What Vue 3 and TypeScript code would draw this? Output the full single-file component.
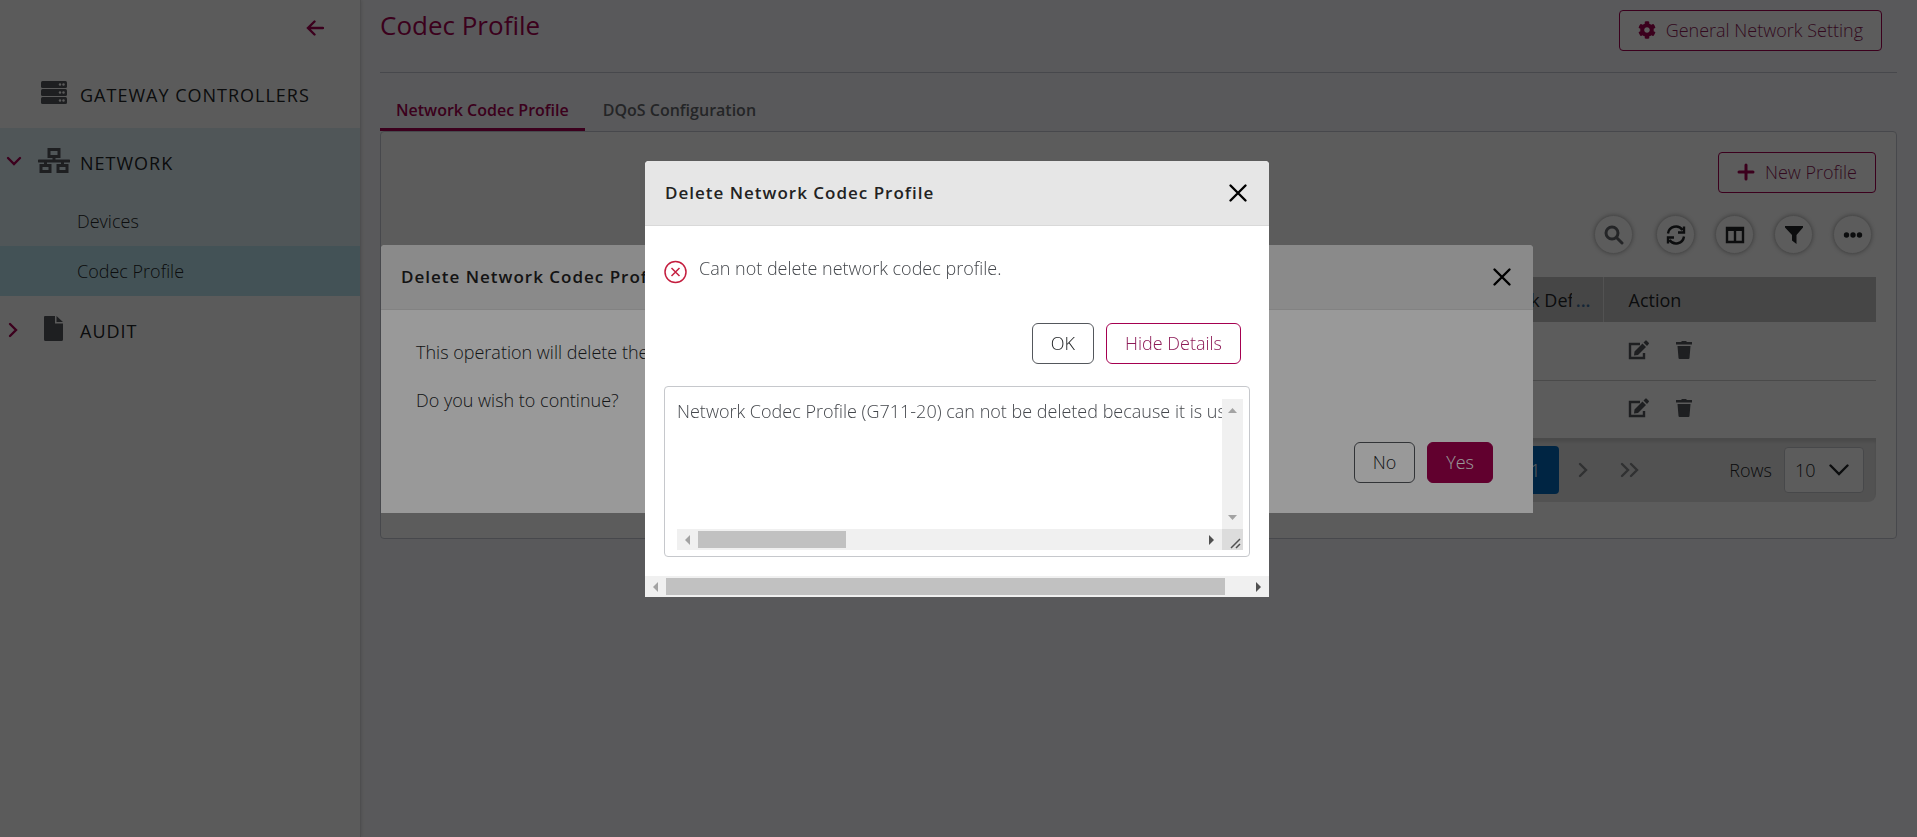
<script setup lang="ts">
import { ref } from 'vue'

interface ProfileRow {
  id: number
}

const rows: ProfileRow[] = [{ id: 1 }, { id: 2 }]
const pageSize = ref('10')
const details = ref('Network Codec Profile (G711-20) can not be deleted because it is used')
</script>

<template>
  <div class="app">
    <nav class="sidebar" aria-label="Main">
      <div class="sidebar-top">
        <button class="icon-btn accent" aria-label="Collapse menu">
          <svg width="18" height="18" viewBox="0 0 18 18"><path d="M8.500 2.500 2 9l6.500 6.500M2.500 9H17" class="line w2" /></svg>
        </button>
      </div>
      <a href="#" class="nav-item">
        <span class="caret"></span>
        <svg class="nav-icon" width="32" height="28" viewBox="0 0 32 28">
          <g fill="currentColor"><rect x="3" y="1" width="26" height="7" rx="1.500" /><rect x="3" y="9" width="26" height="7" rx="1.500" /><rect x="3" y="17" width="26" height="7" rx="1.500" /></g>
          <g class="leds"><circle cx="22" cy="4.500" r="1.200" /><circle cx="25.500" cy="4.500" r="1.200" /><circle cx="22" cy="12.500" r="1.200" /><circle cx="25.500" cy="12.500" r="1.200" /><circle cx="22" cy="20.500" r="1.200" /><circle cx="25.500" cy="20.500" r="1.200" /></g>
        </svg>
        <span>GATEWAY CONTROLLERS</span>
      </a>
      <div class="nav-group">
        <a href="#" class="nav-item">
          <svg class="caret" width="16" height="16" viewBox="0 0 16 16"><path d="m2 4 6 6 6-6" class="line w2" /></svg>
          <svg class="nav-icon" width="32" height="28" viewBox="0 0 32 28">
            <path d="M11 1.500h10v7H11zM3 17.500h9v6H3zM20 17.500h9v6h-9zM16 9v4M7.500 13v4M24.500 13v4M1 13h30" class="line w3" />
          </svg>
          <span>NETWORK</span>
        </a>
        <a href="#" class="sub-item">Devices</a>
        <a href="#" class="sub-item active">Codec Profile</a>
      </div>
      <a href="#" class="nav-item">
        <svg class="caret" width="16" height="16" viewBox="0 0 16 16"><path d="m4 2 6 6-6 6" class="line w2" /></svg>
        <svg class="nav-icon" width="32" height="28" viewBox="0 0 32 28">
          <path d="M7 0h10v7.500h8V23.500a1.500 1.500 0 0 1-1.500 1.500h-16A1.500 1.500 0 0 1 6 23.500V1a1 1 0 0 1 1-1ZM18.500 0l6.500 6h-6.500z" fill="currentColor" />
        </svg>
        <span>AUDIT</span>
      </a>
    </nav>

    <main class="content">
      <header class="page-head">
        <h1>Codec Profile</h1>
        <button class="btn outline">
          <svg width="18" height="18" viewBox="0 0 512 512"><path fill="currentColor" d="M487.400 315.700l-42.600-24.600c4.300-23.200 4.300-47 0-70.200l42.600-24.600c4.900-2.800 7.100-8.600 5.500-14-11.100-35.600-30-67.800-54.700-94.600-3.800-4.100-10-5.100-14.800-2.300L380.800 110c-17.900-15.400-38.500-27.300-60.800-35.100V25.800c0-5.600-3.900-10.500-9.400-11.700-36.700-8.200-74.300-7.800-109.200 0-5.500 1.200-9.400 6.100-9.400 11.700V75c-22.200 7.900-42.800 19.800-60.800 35.100L88.700 85.500c-4.900-2.800-11-1.900-14.800 2.300-24.700 26.700-43.600 58.900-54.700 94.600-1.700 5.400.6 11.200 5.500 14L67.300 221c-4.300 23.200-4.300 47 0 70.200l-42.600 24.600c-4.900 2.800-7.100 8.600-5.500 14 11.100 35.600 30 67.800 54.700 94.600 3.800 4.100 10 5.100 14.800 2.300l42.600-24.600c17.900 15.400 38.500 27.300 60.800 35.100v49.200c0 5.600 3.900 10.500 9.400 11.700 36.700 8.200 74.300 7.800 109.200 0 5.500-1.200 9.400-6.100 9.400-11.700v-49.200c22.200-7.900 42.800-19.800 60.800-35.100l42.600 24.600c4.900 2.800 11 1.900 14.800-2.300 24.700-26.700 43.600-58.900 54.700-94.600 1.500-5.500-.7-11.300-5.600-14.100zM256 336c-44.100 0-80-35.900-80-80s35.900-80 80-80 80 35.900 80 80-35.900 80-80 80z" /></svg>
          <span>General Network Setting</span>
        </button>
      </header>

      <div class="tabs" role="tablist">
        <button class="tab selected" role="tab" aria-selected="true">Network Codec Profile</button>
        <button class="tab" role="tab" aria-selected="false">DQoS Configuration</button>
      </div>

      <section class="panel">
        <div class="actions">
          <button class="btn outline">
            <svg width="18" height="18" viewBox="0 0 18 18"><path d="M9 2v14M2 9h14" class="line w3" /></svg>
            <span>New Profile</span>
          </button>
        </div>
        <div class="tools">
          <button class="round search" aria-label="Search">
            <svg width="20" height="20" viewBox="0 0 20 20"><circle cx="8" cy="8" r="6" class="line w3" /><path d="m12.500 12.500 5.500 5.500" class="line w3" /></svg>
          </button>
          <button class="round" aria-label="Refresh">
            <svg width="20" height="20" viewBox="0 0 20 20"><path d="M2 8.500a8 8 0 0 1 14.500-3.500M18 1.500v6h-6M18 11.500a8 8 0 0 1-14.500 3.500M2 18.500v-6h6" class="line w2 sharp" /></svg>
          </button>
          <button class="round" aria-label="Columns">
            <svg width="20" height="20" viewBox="0 0 20 20"><path d="M2 3h16v14H2zM10 5v12" class="line w2" /><path d="M1 2h18v4H1z" fill="currentColor" /></svg>
          </button>
          <button class="round" aria-label="Filter">
            <svg width="20" height="20" viewBox="0 0 20 20"><path d="M1 1h18v1.500L12.500 10v9L8 15.500V10L1 2.500z" fill="currentColor" /></svg>
          </button>
          <button class="round" aria-label="More">
            <svg width="20" height="20" viewBox="0 0 20 20" fill="currentColor"><circle cx="3.500" cy="10" r="2.700" /><circle cx="10" cy="10" r="2.700" /><circle cx="16.500" cy="10" r="2.700" /></svg>
          </button>
        </div>
        <table>
          <thead>
            <tr>
              <th></th>
              <th class="default-col"><div class="th-flex"><span class="clip">Network Def</span><button class="dots" aria-label="Column menu">...</button></div></th>
              <th class="action-col">Action</th>
            </tr>
          </thead>
          <tbody>
            <tr v-for="row in rows" :key="row.id">
              <td></td>
              <td></td>
              <td class="action-col">
                <div class="row-actions">
                  <button class="icon-btn" aria-label="Edit">
                    <svg width="22" height="20" viewBox="0 0 22 20"><path d="M12 4H2v14h14v-5" class="line w2 sharp" /><path d="m6.500 11.500 8-8 3.500 3.500-8 8-4 .6zM15.500 2.500l1.800-1.800a1 1 0 0 1 1.400 0l2 2a1 1 0 0 1 0 1.400L19 6z" fill="currentColor" /></svg>
                  </button>
                  <button class="icon-btn" aria-label="Delete">
                    <svg width="18" height="20" viewBox="0 0 18 20"><path d="M1 2h5l1-1h4l1 1h5v2.500H1zM2.500 6h13l-1 12a1.200 1.200 0 0 1-1 1h-9a1.200 1.200 0 0 1-1-1z" fill="currentColor" /></svg>
                  </button>
                </div>
              </td>
            </tr>
          </tbody>
        </table>
        <div class="pager">
          <button class="page-num">1</button>
          <button class="pg" aria-label="Next page"><svg width="20" height="16" viewBox="0 0 20 16"><path d="m7 2 6 6-6 6" class="line w2" /></svg></button>
          <button class="pg" aria-label="Last page"><svg width="20" height="16" viewBox="0 0 20 16"><path d="m2 2 6 6-6 6M11 2l6 6-6 6" class="line w2" /></svg></button>
          <label for="rows">Rows</label>
          <div class="select-box">
            <select id="rows" v-model="pageSize"><option>10</option><option>20</option></select>
            <svg width="20" height="12" viewBox="0 0 20 12"><path d="m1.500 1.500 8.500 8.500 8.500-8.500" class="line w2" /></svg>
          </div>
        </div>
      </section>
    </main>

    <div class="overlay">
      <section class="dialog confirm" role="dialog" aria-labelledby="confirm-title">
        <header class="dlg-head">
          <h2 id="confirm-title">Delete Network Codec Profile</h2>
          <button class="icon-btn close" aria-label="Close"><svg width="20" height="20" viewBox="0 0 20 20"><path d="m2.500 2.500 15 15M17.500 2.500l-15 15" class="line w2" /></svg></button>
        </header>
        <div class="confirm-body">
          <p>This operation will delete the</p>
          <p>Do you wish to continue?</p>
          <div class="dlg-actions">
            <button class="btn neutral">No</button>
            <button class="btn primary">Yes</button>
          </div>
        </div>
      </section>
    </div>

    <div class="overlay">
      <section class="dialog failure" role="alertdialog" aria-labelledby="failure-title">
        <header class="dlg-head">
          <h2 id="failure-title">Delete Network Codec Profile</h2>
          <button class="icon-btn close" aria-label="Close"><svg width="20" height="20" viewBox="0 0 20 20"><path d="m2.500 2.500 15 15M17.500 2.500l-15 15" class="line w2" /></svg></button>
        </header>
        <div class="failure-body">
          <div class="message">
            <svg width="24" height="24" viewBox="0 0 24 24"><g fill="none" stroke="currentColor" stroke-width="1.500"><circle cx="11.500" cy="12" r="10.500" /><path d="m7.500 8 8 8M15.500 8l-8 8" /></g></svg>
            <p>Can not delete network codec profile.</p>
          </div>
          <div class="dlg-actions">
            <button class="btn neutral">OK</button>
            <button class="btn outline">Hide Details</button>
          </div>
          <div class="details">
            <textarea v-model="details" aria-label="Details" wrap="off" readonly></textarea>
            <div class="vbar">
              <svg width="9" height="5" viewBox="0 0 9 5"><path d="M0 5 4.500 0 9 5z" fill="#a3a3a3" /></svg>
              <svg width="9" height="5" viewBox="0 0 9 5"><path d="M0 0h9L4.500 5z" fill="#a3a3a3" /></svg>
            </div>
            <div class="hbar">
              <svg width="5" height="10" viewBox="0 0 5 10"><path d="M5 0v10L0 5z" fill="#a3a3a3" /></svg>
              <div class="track"><div class="thumb short"></div></div>
              <svg width="5" height="10" viewBox="0 0 5 10"><path d="M0 0v10l5-5z" fill="#505050" /></svg>
            </div>
            <div class="grip">
              <svg width="12" height="12" viewBox="0 0 12 12"><path d="m1 11 9-9M6 11l4-4" fill="none" stroke="#505050" stroke-width="1.500" /></svg>
            </div>
          </div>
        </div>
        <div class="hbar">
          <svg width="5" height="10" viewBox="0 0 5 10"><path d="M5 0v10L0 5z" fill="#a3a3a3" /></svg>
          <div class="track"><div class="thumb long"></div></div>
          <svg width="5" height="10" viewBox="0 0 5 10"><path d="M0 0v10l5-5z" fill="#505050" /></svg>
        </div>
      </section>
    </div>
  </div>
</template>

<style>
body {
  margin: 0;
}
</style>

<style scoped>
.app {
  display: flex;
  min-height: 100vh;
  background: #f7f7fb;
  color: #222527;
  font: 350 18px/24px 'Open Sans', 'Noto Sans', sans-serif;
}
.app *,
.app {
  box-sizing: border-box;
}
button,
select,
textarea {
  font: inherit;
  color: inherit;
  margin: 0;
}
h1,
h2,
p {
  margin: 0;
}
a {
  color: inherit;
  text-decoration: none;
}
svg {
  flex: none;
  display: block;
}
.line {
  fill: none;
  stroke: currentColor;
  stroke-linecap: round;
}
.sharp {
  stroke-linecap: butt;
}
.w2 {
  stroke-width: 2.400;
}
.w3 {
  stroke-width: 3;
}
.icon-btn {
  display: flex;
  padding: 0;
  border: 0;
  background: none;
}
.accent {
  color: #a50050;
}

.sidebar {
  flex: none;
  width: 361px;
  background: #fdfdfd;
  border-right: 1px solid #d8d8da;
  box-shadow: 1px 0 3px rgba(0, 0, 0, 0.1);
}
.sidebar-top {
  display: flex;
  justify-content: flex-end;
  align-items: center;
  height: 60px;
  padding: 0 36px 4px 0;
}
.nav-item {
  display: flex;
  align-items: center;
  height: 68px;
  padding-left: 6px;
  font-weight: 500;
  letter-spacing: 1px;
}
.nav-item span {
  padding-top: 2px;
}
.caret {
  width: 16px;
  margin-right: 16px;
  color: #a50050;
}
.nav-icon {
  margin-right: 10px;
  color: #54575c;
}
.leds {
  fill: #fdfdfd;
}
.nav-group {
  background: #deeff4;
}
.sub-item {
  display: block;
  padding: 13px 0 13px 77px;
}
.sub-item.active {
  background: #bae4ef;
}

.content {
  flex: 1;
  min-width: 0;
  padding: 0 20px 0 19px;
}
.page-head {
  display: flex;
  justify-content: space-between;
  align-items: flex-start;
  height: 73px;
  padding: 10px 15px 0 0;
  border-bottom: 1px solid #c6c8d2;
}
h1 {
  color: #a50050;
  font-size: 26px;
  line-height: 30px;
  font-weight: 500;
}
.btn {
  display: flex;
  align-items: center;
  justify-content: center;
  gap: 10px;
  height: 41px;
  padding: 0 18px 1px;
  border: 1px solid #a50050;
  border-radius: 4px;
  background: #fff;
  color: #8d1a57;
}
.btn svg {
  color: #a50050;
}
.tabs {
  display: flex;
  gap: 2px;
  padding-top: 18px;
}
.tab {
  height: 40px;
  padding: 0 16px;
  border: 0;
  border-bottom: 3px solid transparent;
  background: none;
  font-size: 16px;
  font-weight: 600;
  color: #65686d;
}
.tab.selected {
  color: #a50050;
  border-color: #a50050;
}
.panel {
  padding: 20px 20px 36px;
  border: 1px solid #c6c8d2;
  border-radius: 4px;
  background: #fefefe;
}
.actions,
.tools {
  display: flex;
  justify-content: flex-end;
}
.tools {
  gap: 20px;
  padding: 22px 4px 23px 0;
}
.round {
  display: flex;
  align-items: center;
  justify-content: center;
  width: 39px;
  height: 39px;
  padding: 0;
  border: 1px solid #d2d2d2;
  border-radius: 50%;
  background: #fff;
  box-shadow: 0 0 4px rgba(0, 0, 0, 0.3);
}
.round.search {
  margin-right: 3px;
  color: #65686d;
}
table {
  width: 100%;
  table-layout: fixed;
  border-collapse: collapse;
}
th {
  height: 45px;
  padding: 0;
  background: #c3c3c3;
  font-weight: 500;
  text-align: left;
}
td {
  height: 58px;
  padding: 0;
  border-bottom: 1px solid #cdcdcd;
}
.default-col {
  width: 164px;
  border-right: 1px solid #e4e4e4;
}
.action-col {
  width: 273px;
  padding-left: 25px;
}
.th-flex {
  display: flex;
  gap: 4px;
  padding: 0 12px 0 29px;
}
.clip {
  flex: 1;
  overflow: hidden;
  white-space: nowrap;
}
.dots {
  padding: 0;
  border: 0;
  background: none;
  color: #3b6a97;
  font-weight: 600;
}
.row-actions {
  display: flex;
  gap: 25px;
  padding-bottom: 2px;
  color: #54575c;
}
.pager {
  display: flex;
  align-items: center;
  justify-content: flex-end;
  height: 63px;
  padding-right: 12px;
  border-radius: 0 0 8px 8px;
  background: #e3e3e3;
  box-shadow: inset 0 3px 3px rgba(0, 0, 0, 0.1);
}
.page-num {
  width: 48px;
  height: 48px;
  margin-right: 14px;
  border: 0;
  border-radius: 4px;
  background: #0067bb;
  color: #fff;
}
.pg {
  margin-right: 27px;
  padding: 0;
  border: 0;
  background: none;
  color: #85878a;
}
.pg + label {
  margin-left: 62px;
}
.select-box {
  display: flex;
  align-items: center;
  width: 80px;
  height: 46px;
  margin-left: 12px;
  padding-right: 14px;
  border: 1px solid #c6c8cc;
  border-radius: 4px;
  background: #fff;
}
.select-box select {
  flex: 1;
  min-width: 0;
  height: 100%;
  padding: 0 0 0 10px;
  border: 0;
  appearance: none;
  background: none;
}

.overlay {
  position: fixed;
  inset: 0;
  display: flex;
  align-items: center;
  justify-content: center;
  padding: 0 3px 79px 0;
  background: rgba(0, 0, 0, 0.4);
}
.dialog {
  border-radius: 4px 4px 0 0;
  background: #fff;
  overflow: hidden;
}
.confirm {
  width: 1152px;
}
.failure {
  width: 624px;
}
.dlg-head {
  display: flex;
  align-items: center;
  justify-content: space-between;
  height: 65px;
  padding: 0 21px 0 20px;
  background: #e6e6e6;
  border-bottom: 1px solid #d9d9d9;
}
h2 {
  font-size: 17px;
  line-height: 24px;
  font-weight: 600;
  letter-spacing: 1px;
  color: #222;
}
.close {
  color: #000;
}
.confirm-body {
  padding: 30px 35px 30px;
}
.confirm-body p {
  padding-bottom: 24px;
}
.confirm-body .dlg-actions {
  padding: 6px 5px 0 0;
}
.dlg-actions {
  display: flex;
  justify-content: flex-end;
  gap: 12px;
}
.dlg-actions .btn {
  border-radius: 6px;
}
.btn.neutral {
  border-color: #54575c;
  color: #222527;
}
.btn.primary {
  border-color: #a2004d;
  background: #a2004d;
  color: #fff;
}
.failure-body {
  padding: 30px 19px 19px;
  color: #44474c;
}
.message {
  display: flex;
  gap: 11px;
}
.message svg {
  margin-top: 4px;
  color: #c41e3f;
}
.failure-body .dlg-actions {
  padding: 39px 9px 22px 0;
}
.details {
  display: grid;
  grid-template: 130px 21px / 1fr 21px;
  padding: 12px 6px 6px 12px;
  border: 1px solid #c6c8cc;
  border-radius: 4px;
}
textarea {
  width: 100%;
  height: 100%;
  padding: 0;
  border: 0;
  outline: 0;
  resize: none;
  overflow: hidden;
  background: none;
}
.vbar {
  display: flex;
  flex-direction: column;
  align-items: center;
  justify-content: space-between;
  padding: 9px 0;
  background: #f0f0f0;
}
.hbar {
  display: flex;
  align-items: center;
  justify-content: space-between;
  gap: 8px;
  height: 21px;
  padding: 0 8px;
  background: #f0f0f0;
}
.track {
  flex: 1;
}
.thumb {
  height: 17px;
  background: #c1c1c1;
}
.short {
  width: 148px;
}
.long {
  width: 96%;
}
.grip {
  display: flex;
  align-items: flex-end;
  justify-content: flex-end;
  padding: 1px;
  background: #dcdcdc;
}
</style>
